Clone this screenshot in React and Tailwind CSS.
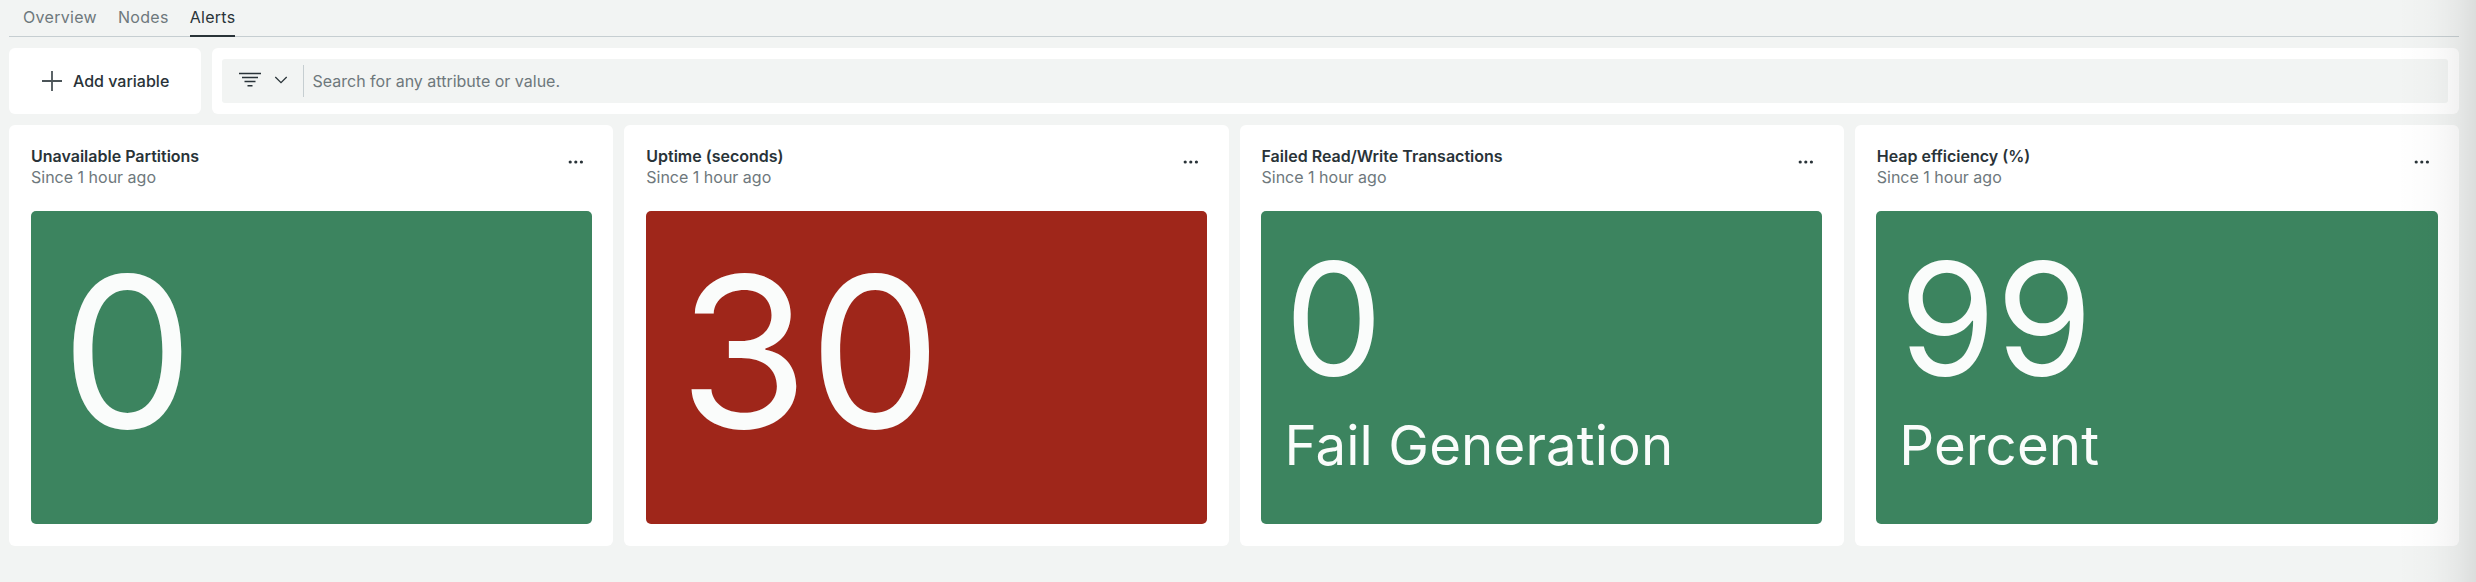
const TABS = [
  { label: "Overview", active: false },
  { label: "Nodes", active: false },
  { label: "Alerts", active: true },
];

const CARDS = [
  { title: "Unavailable Partitions", value: "0", tone: "bg-[#3c845f]", inset: "pl-[30.5px]" },
  { title: "Uptime (seconds)", value: "30", tone: "bg-[#9f261a]", inset: "pl-[33px]" },
  { title: "Failed Read/Write Transactions", value: "0", unit: "Fail Generation", tone: "bg-[#3c845f]", inset: "pl-[23.5px]" },
  { title: "Heap efficiency (%)", value: "99", unit: "Percent", tone: "bg-[#3c845f]", inset: "pl-[23px]" },
];

function PlusIcon() {
  return (
    <svg width="20" height="20" viewBox="0 0 20 20" className="shrink-0" aria-hidden="true">
      <path d="M10 0v20M0 10h20" stroke="#4b5458" strokeWidth="1.8" fill="none" />
    </svg>
  );
}

function FilterIcon() {
  return (
    <svg width="22" height="16" viewBox="0 0 22 16" className="shrink-0" aria-hidden="true">
      <path d="M0 1.6h22M3 5.6h16M5.5 9.6h11M8.5 13.7h5" stroke="#293338" strokeWidth="1.5" fill="none" />
    </svg>
  );
}

function ChevronIcon() {
  return (
    <svg width="14" height="8" viewBox="0 0 14 8" className="shrink-0" aria-hidden="true">
      <path d="M1.3 1l5.7 5.6L12.7 1" stroke="#293338" strokeWidth="1.3" fill="none" />
    </svg>
  );
}

function MoreIcon() {
  return (
    <svg width="16" height="4" viewBox="0 0 16 4" className="shrink-0" aria-hidden="true">
      <circle cx="2.2" cy="2" r="1.6" fill="#293338" />
      <circle cx="7.8" cy="2" r="1.6" fill="#293338" />
      <circle cx="13.4" cy="2" r="1.6" fill="#293338" />
    </svg>
  );
}

function MetricPanel({ value, unit, tone, inset }) {
  if (unit) {
    return (
      <div className={`h-[313.5px] rounded-[5px] pt-[30.5px] text-[#fafcfb] ${inset} ${tone}`}>
        <div className="text-[156px] leading-none">{value}</div>
        <div className="mt-[21px] text-[54.6px] leading-none tracking-[0.1px] whitespace-nowrap">{unit}</div>
      </div>
    );
  }
  return (
    <div className={`h-[313.5px] rounded-[5px] pt-[36.5px] text-[#fafcfb] ${inset} ${tone}`}>
      <div className="text-[210.5px] leading-none">{value}</div>
    </div>
  );
}

function MetricCard({ title, ...panel }) {
  return (
    <section className="h-[421.5px] rounded-[6px] bg-white px-[21.5px] pt-[21px]">
      <header className="flex h-[65px] items-start justify-between">
        <div className="pl-[0.5px] text-base leading-[21px]">
          <h2 className="font-semibold">{title}</h2>
          <p className="text-[#6e787c]">Since 1 hour ago</p>
        </div>
        <button type="button" className="mt-[14.5px] mr-[8px]" aria-label="More options">
          <MoreIcon />
        </button>
      </header>
      <MetricPanel {...panel} />
    </section>
  );
}

export default function App() {
  return (
    <div className="relative h-[582px] overflow-hidden bg-[#f2f4f3] pr-[17px] pl-[9px] font-['Inter','Liberation_Sans',sans-serif] text-[#293338]">
      <nav className="flex h-[37px] gap-[21px] border-b border-[#c6ced1] pl-[14px] tracking-[0.3px]">
        {TABS.map(({ label, active }) => (
          <a
            key={label}
            className={
              active
                ? "-mb-px h-[37px] border-b-2 border-[#293338] pt-[5px] leading-6"
                : "pt-[5px] leading-6 text-[#6e787c]"
            }
          >
            {label}
          </a>
        ))}
      </nav>

      <div className="mt-[11px] flex h-[66px] gap-[11px]">
        <button type="button" className="flex w-[192px] items-center rounded-[6px] bg-white pl-[33px] font-medium">
          <PlusIcon />
          <span className="-mt-px ml-[11px]">Add variable</span>
        </button>
        <div className="flex-1 rounded-[6px] bg-white py-[11px] pr-[11px] pl-[10px]">
          <div className="flex h-[44px] items-center rounded-[3px] bg-[#f2f4f3] pl-[17px]">
            <div className="-mt-[2px] flex items-center gap-[13px]">
              <FilterIcon />
              <ChevronIcon />
            </div>
            <div className="ml-[15px] h-[32px] w-px bg-[#c6ced1]" />
            <span className="ml-[8.5px] text-[#6e787c]">Search for any attribute or value.</span>
          </div>
        </div>
      </div>

      <main className="mt-[10.5px] grid grid-cols-4 gap-[11px]">
        {CARDS.map((card) => (
          <MetricCard key={card.title} {...card} />
        ))}
      </main>

      <div className="pointer-events-none absolute inset-y-0 right-0 w-[80px] bg-[linear-gradient(to_right,rgba(0,0,0,0)_0%,rgba(0,0,0,0.012)_40%,rgba(0,0,0,0.03)_62%,rgba(0,0,0,0.055)_80%,rgba(0,0,0,0.095)_100%)]" />
    </div>
  );
}
